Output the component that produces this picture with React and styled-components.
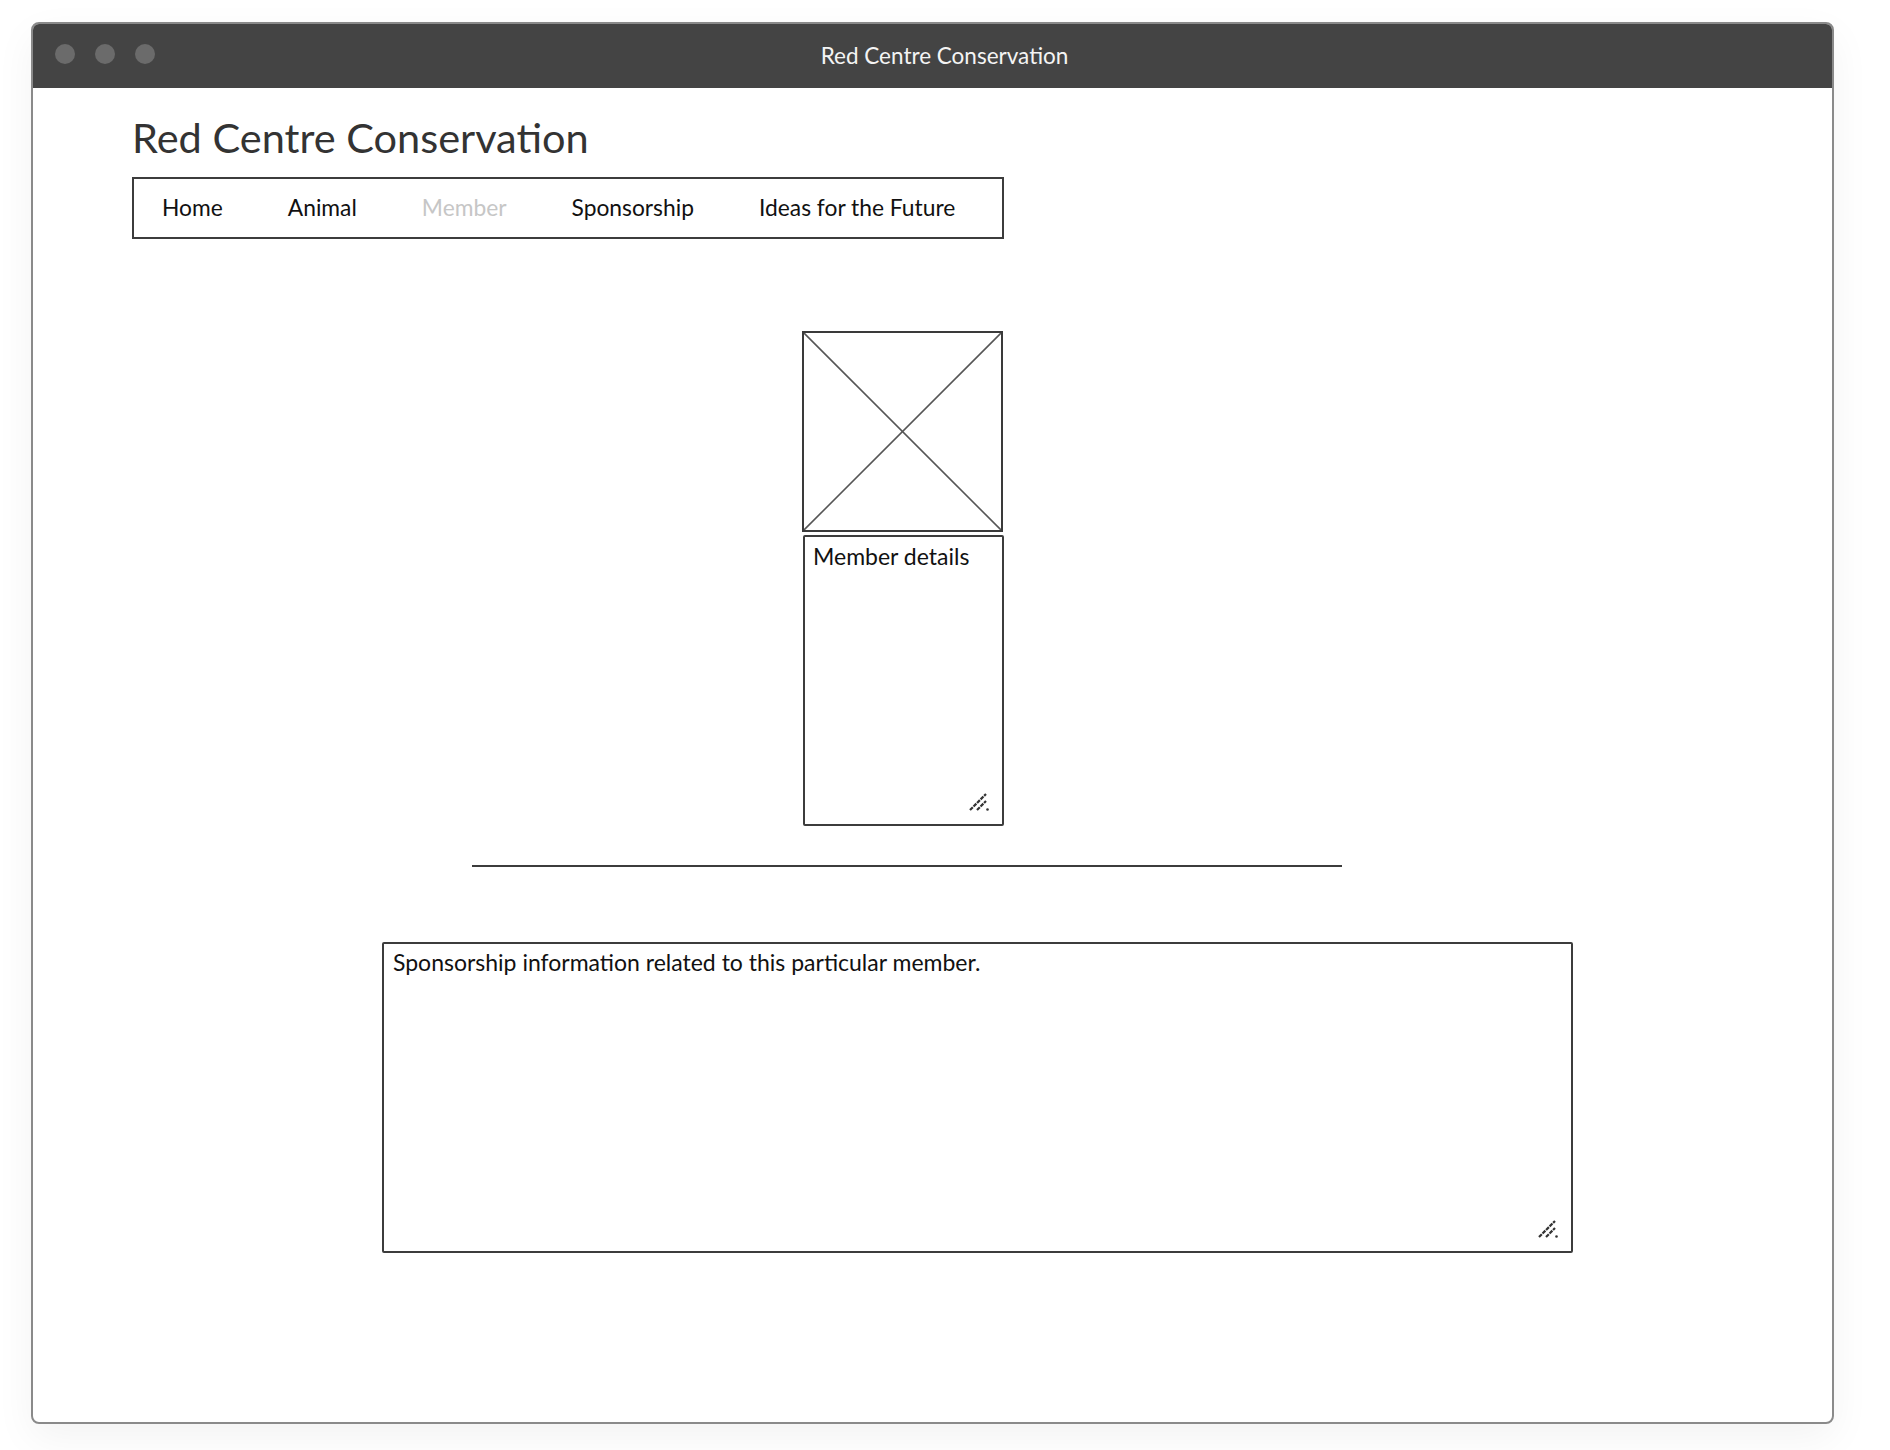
import React from 'react';
import styled, { createGlobalStyle } from 'styled-components';

const GlobalStyle = createGlobalStyle`
    html, body {
        margin: 0;
        padding: 0;
        background: #ffffff;
    }
    body {
        font-family: 'Lato', 'Open Sans', sans-serif;
        color: #111;
    }
    * {
        box-sizing: border-box;
    }
`

const Stage = styled.div`
    padding: 22px 0 0 31px;
    width: 1890px;
    height: 1450px;
    overflow: hidden;
`

const Window = styled.div`
    width: 1803px;
    height: 1402px;
    border: 2px solid #8a8a8a;
    border-radius: 8px;
    overflow: hidden;
    display: flex;
    flex-direction: column;
    background: #fff;
    box-shadow: 0 14px 40px rgba(0, 0, 0, 0.05);
`

const TitleBar = styled.div`
    height: 64px;
    flex-shrink: 0;
    background: #444444;
    display: flex;
    align-items: center;
    padding-left: 22px;

    .dots {
        display: flex;
        gap: 20px;
        margin-top: -4px;
    }
    .title {
        flex: 1;
        text-align: center;
        color: #f4f4f4;
        font-size: 22.5px;
        line-height: 1.2;
        margin-right: 98px;
        margin-top: -2px;
    }
`

const Dot = styled.span`
    width: 20px;
    height: 20px;
    border-radius: 50%;
    background: #6b6b6b;
`

const Content = styled.div`
    display: flex;
    flex-direction: column;
    align-items: flex-start;
`

const Heading = styled.h1`
    margin: 25px 0 0 99px;
    font-size: 41.5px;
    font-weight: normal;
    line-height: 1.2;
    color: #333;
`

const NavBar = styled.nav`
    margin: 14px 0 0 99px;
    width: 872px;
    height: 62px;
    border: 2px solid #3c3c3c;
    display: flex;
    align-items: center;
    gap: 65px;
    padding-left: 28px;
`

const NavItem = styled.span`
    font-size: 22.8px;
    line-height: 1.2;
    color: ${props => (props.active ? '#c6c6c6' : '#111')};
`

const ImageBox = styled.div`
    margin: 92px 0 0 769px;
    width: 201px;
    height: 201px;
    border: 2px solid #3a3a3a;

    svg {
        display: block;
        width: 100%;
        height: 100%;
    }
`

const TextBox = styled.div`
    position: relative;
    margin: ${props => props.top}px 0 0 ${props => props.left}px;
    width: ${props => props.w}px;
    height: ${props => props.h}px;
    border: 2px solid #3c3c3c;
    border-radius: 2px;
    padding: ${props => props.padTop}px 8px 0 ${props => props.padLeft}px;
    font-size: 23px;
    line-height: 1.2;
    color: #111;

    .grip {
        position: absolute;
        right: 13px;
        bottom: 13px;
        width: 20px;
        height: 20px;
    }
`

const Rule = styled.hr`
    margin: 39px 0 0 439px;
    width: 870px;
    height: 2px;
    border: none;
    background: #3c3c3c;
`

const Grip = () => (
    <svg className="grip" viewBox="0 0 20 20">
        <line x1="1" y1="19" x2="17" y2="3" stroke="#333" strokeWidth="2.2" strokeDasharray="4 1" />
        <line x1="8" y1="19" x2="17" y2="10" stroke="#333" strokeWidth="2.2" strokeDasharray="4 1" />
        <circle cx="18.5" cy="18.5" r="1.3" fill="#333" />
    </svg>
)

const navLinks = ['Home', 'Animal', 'Member', 'Sponsorship', 'Ideas for the Future']

export default function App() {
    return (
        <Stage>
            <GlobalStyle />
            <Window>
                <TitleBar>
                    <div className="dots">
                        <Dot />
                        <Dot />
                        <Dot />
                    </div>
                    <div className="title">Red Centre Conservation</div>
                </TitleBar>
                <Content>
                    <Heading>Red Centre Conservation</Heading>
                    <NavBar>
                        {navLinks.map(link => (
                            <NavItem key={link} active={link === 'Member'}>{link}</NavItem>
                        ))}
                    </NavBar>
                    <ImageBox>
                        <svg viewBox="0 0 197 197" preserveAspectRatio="none">
                            <line x1="0" y1="0" x2="197" y2="197" stroke="#555" strokeWidth="1.6" />
                            <line x1="197" y1="0" x2="0" y2="197" stroke="#555" strokeWidth="1.6" />
                        </svg>
                    </ImageBox>
                    <TextBox top={3} left={770} w={201} h={291} padTop={6} padLeft={8}>
                        Member details
                        <Grip />
                    </TextBox>
                    <Rule />
                    <TextBox top={75} left={349} w={1191} h={311} padTop={5} padLeft={9}>
                        Sponsorship information related to this particular member.
                        <Grip />
                    </TextBox>
                </Content>
            </Window>
        </Stage>
    );
}
